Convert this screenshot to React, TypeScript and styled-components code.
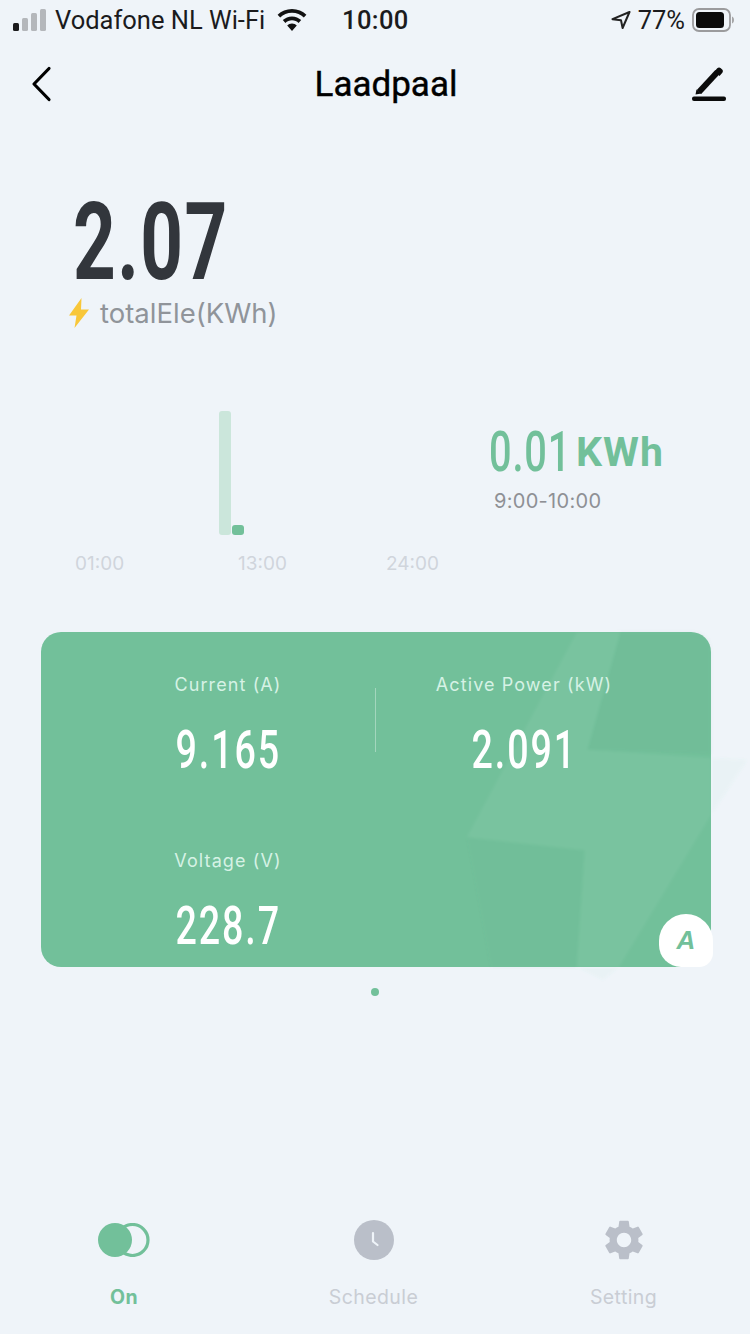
import React from "react";
import styled, { createGlobalStyle } from "styled-components";
import { MdSettings } from "react-icons/md";

const Global = createGlobalStyle`
  html, body { margin: 0; padding: 0; background: #eff4f9; }
  * { box-sizing: border-box; }
`;
const GREEN = "#72c09a";

const Page = styled.div`
  width: 750px; height: 1334px; background: #eff4f9; display: flex; flex-direction: column;
  font-family: Inter, "Liberation Sans", sans-serif; overflow: hidden; color: #000;
`;
const StatusBar = styled.div`
  height: 40px; padding: 0 13px; display: grid; grid-template-columns: 329px 80px 1fr; align-items: center;
  font-family: Roboto, sans-serif; font-size: 25.500px; color: #1b1b1d;
`;
const StatusLeft = styled.div`display: flex; align-items: center; white-space: nowrap;`;
const StatusCarrier = styled.span`margin: 0 12px 0 9px;`;
const StatusTime = styled.div`font-weight: 500; font-size: 25.500px; letter-spacing: 0.4px;`;
const StatusRight = styled.div`display: flex; align-items: center; justify-content: flex-end; gap: 7px; padding-right: 3px;`;
const NavBar = styled.div`
  height: 88px; padding: 0 24px 0 30px; display: flex; align-items: center; justify-content: space-between;
`;
const NavTitle = styled.div`font-family: Roboto, sans-serif; font-size: 35px; font-weight: 400; margin-left: 28px; -webkit-text-stroke: 0.4px #000;`;
const Hero = styled.section`padding: 71px 0 0 69px; height: 283px;`;
const Condensed = styled.span<{ $size: number; $weight?: number; $color?: string }>`
  display: inline-block; font-family: Roboto, sans-serif; white-space: nowrap;
  font-size: ${(p) => p.$size}px; line-height: ${(p) => Math.round(p.$size * 0.8)}px;
  font-weight: ${(p) => p.$weight ?? 500}; color: ${(p) => p.$color ?? "#fff"};
  transform: scaleX(0.71); letter-spacing: 0.02em;
`;
const HeroNumber = styled(Condensed)`transform-origin: left center; transform: scaleX(0.69); margin-left: 4px;`;
const HeroLabel = styled.div`
  display: flex; align-items: center; gap: 11px; margin-top: 11px; font-size: 27.500px; color: #90949a; line-height: 34px;
`;
const ChartRow = styled.section`
  height: 221px; padding-left: 75px; display: grid; grid-template-columns: 414px 1fr; position: relative;
`;
const ChartArea = styled.div`display: flex; flex-direction: column;`;
const Bars = styled.div`
  height: 124px; padding-left: 144px; display: flex; align-items: flex-end; gap: 1px;
`;
const Bar = styled.div<{ $h: number; $light?: boolean }>`
  width: 12px; height: ${(p) => p.$h}px; border-radius: 3px; background: ${(p) => (p.$light ? "#cbe6db" : GREEN)};
`;
const Axis = styled.div`
  display: flex; margin-top: 17px; font-size: 19px; line-height: 24px; color: #d0d5dc;
`;
const AxisLabel = styled.span<{ $w: number }>`width: ${(p) => p.$w}px; flex: none;`;
const Reading = styled.div`display: flex; flex-direction: column; padding-top: 21px;`;
const ReadingTop = styled.div`display: flex; align-items: center; height: 40px;`;
const ReadingNumber = styled(Condensed)`transform-origin: left center; width: 88px;`;
const ReadingUnit = styled.span`
  font-family: Roboto, sans-serif; font-size: 41px; font-weight: 700; color: ${GREEN}; letter-spacing: 1px; margin-left: -1px;
`;
const ReadingTime = styled.div`
  margin: 15px 0 0 5px; font-size: 20px; line-height: 28px; color: #8e9095; letter-spacing: 0.3px;
`;
const Card = styled.section`
  position: relative; margin: 0 39px 0 41px; height: 335px; border-radius: 20px; background: ${GREEN};
  padding: 39px 39px 0; display: grid; grid-template-columns: 296px 296px; grid-auto-rows: 176px;
`;
const BoltArt = styled.svg`position: absolute; left: 0; top: 0; overflow: visible; pointer-events: none;`;
const Metric = styled.div`
  position: relative; display: flex; flex-direction: column; align-items: center;
`;
const MetricLabel = styled.div`
  font-size: 18px; line-height: 28px; color: #d6f2e5; letter-spacing: 1.100px; white-space: nowrap;
`;
const MetricValue = styled(Condensed)`margin-top: 29px; line-height: 44px; letter-spacing: 0.05em;`;
const Divider = styled.div`
  position: absolute; right: 0; top: 17px; width: 1px; height: 64px; background: rgba(255,255,255,.35);
`;
const Badge = styled.div`
  position: absolute; right: -2px; bottom: 0; width: 54px; height: 53px; background: #fff;
  border-radius: 27px 27px 14px 22px; display: flex; align-items: center; justify-content: center;
  font-family: "Liberation Sans", sans-serif; font-style: italic; font-weight: 700; font-size: 26px; color: ${GREEN};
`;
const Pager = styled.div`display: flex; justify-content: center; margin-top: 21px;`;
const PagerDot = styled.span`width: 8px; height: 8px; border-radius: 50%; background: ${GREEN};`;
const TabBar = styled.nav`
  margin-top: auto; height: 134px; padding-top: 20px; display: grid; grid-template-columns: 248px 251px 249px;
`;
const Tab = styled.div`display: flex; flex-direction: column; align-items: center;`;
const TabIcon = styled.div`height: 40px; display: flex; align-items: center; justify-content: center;`;
const TabLabel = styled.div<{ $active?: boolean }>`
  margin-top: 22px; font-size: 19.500px; line-height: 30px; letter-spacing: 0.4px;
  font-weight: ${(p) => (p.$active ? 700 : 400)}; color: ${(p) => (p.$active ? GREEN : "#c9cdd4")};
`;

const Signal = () => (
  <svg width="33" height="22" viewBox="0 0 33 22">
    <rect x="0" y="14" width="6" height="8" rx="1.500" fill="#1b1b1d" />
    <rect x="9" y="9" width="6" height="13" rx="1.500" fill="#b4b7bb" />
    <rect x="18" y="4" width="6" height="18" rx="1.500" fill="#b4b7bb" />
    <rect x="27" y="0" width="6" height="22" rx="1.500" fill="#b4b7bb" />
  </svg>
);
const Wifi = () => (
  <svg width="30" height="22" viewBox="0 0 30 22" fill="#111">
    <path d="M15 0C9.400 0 4.300 2.200.6 5.800l2.600 2.800C6.200 5.600 10.400 3.800 15 3.800s8.800 1.800 11.800 4.800l2.600-2.800C25.700 2.200 20.600 0 15 0z" />
    <path d="M15 7.400c-3.600 0-6.800 1.400-9.200 3.700l2.600 2.800c1.700-1.700 4-2.700 6.600-2.700s4.900 1 6.600 2.700l2.600-2.800c-2.400-2.300-5.600-3.700-9.200-3.700z" />
    <path d="M15 14.600c-1.900 0-3.600.8-4.800 2L15 22l4.800-5.400c-1.200-1.200-2.900-2-4.800-2z" />
  </svg>
);
const LocationArrow = () => (
  <svg width="20" height="18" viewBox="0 0 20 18" fill="none" stroke="#222" strokeWidth="2" strokeLinejoin="round">
    <path d="M18.500 1 1.500 8.200 10 9.300 11.600 17z" />
  </svg>
);
const Battery = () => (
  <svg width="42" height="24" viewBox="0 0 42 24">
    <rect x="1" y="1" width="37" height="22" rx="6" fill="none" stroke="#9b9b9d" strokeWidth="1.800" />
    <rect x="4" y="4" width="28" height="16" rx="3.500" fill="#0a0a0a" />
    <path d="M40 8.500c1.200.4 2 1.800 2 3.500s-.8 3.100-2 3.500z" fill="#a5a5a7" />
  </svg>
);
const Back = () => (
  <svg width="22" height="36" viewBox="0 0 22 36" fill="none" stroke="#000" strokeWidth="3.200" strokeLinecap="round" strokeLinejoin="round">
    <path d="M19 2.500 4 18l15 15.500" />
  </svg>
);
const Pencil = () => (
  <svg width="34" height="34" viewBox="0 0 34 34">
    <path d="M7 25 25.500 5" fill="none" stroke="#0b0b0b" strokeWidth="6" strokeLinecap="butt" />
    <path d="M4.500 22.500 3.500 27.500 9.500 26.500z" fill="#0b0b0b" />
    <path d="M25 1.500c1-1.200 2.500-1.500 3.500-.6l1.700 1.500c1 1 .9 2.400-.1 3.500L27.500 9 22.500 4.500z" fill="#0b0b0b" />
    <rect x="0" y="29.500" width="34" height="4.500" rx="2" fill="#0b0b0b" />
  </svg>
);
const SmallBolt = () => (
  <svg width="20" height="30" viewBox="0 0 20 30">
    <path d="M12.500 0 0 17.500h7.500L5.500 30 20 11.500h-8z" fill="#f8c73a" />
  </svg>
);
const ToggleIcon = () => (
  <svg width="52" height="34" viewBox="0 0 52 34">
    <circle cx="34.500" cy="17" r="15.500" fill="none" stroke={GREEN} strokeWidth="3.200" />
    <circle cx="17" cy="17" r="17" fill={GREEN} />
  </svg>
);
const ClockIcon = () => (
  <svg width="40" height="40" viewBox="0 0 40 40">
    <circle cx="20" cy="20" r="20" fill="#babfc9" />
    <path d="M19 13v8.500l4.500 3.500" fill="none" stroke="#eff4f9" strokeWidth="2.200" strokeLinecap="round" strokeLinejoin="round" />
  </svg>
);

export default function App() {
  return (
    <Page>
      <Global />
      <StatusBar>
        <StatusLeft>
          <Signal />
          <StatusCarrier>Vodafone NL Wi-Fi</StatusCarrier>
          <Wifi />
        </StatusLeft>
        <StatusTime>10:00</StatusTime>
        <StatusRight>
          <LocationArrow />
          <span>77%</span>
          <Battery />
        </StatusRight>
      </StatusBar>
      <NavBar>
        <Back />
        <NavTitle>Laadpaal</NavTitle>
        <Pencil />
      </NavBar>
      <Hero>
        <HeroNumber $size={108} $weight={700} $color="#32363c">2.07</HeroNumber>
        <HeroLabel>
          <SmallBolt />
          <span>totalEle(KWh)</span>
        </HeroLabel>
      </Hero>
      <ChartRow>
        <ChartArea>
          <Bars>
            <Bar $h={124} $light />
            <Bar $h={10} />
          </Bars>
          <Axis>
            <AxisLabel $w={163}>01:00</AxisLabel>
            <AxisLabel $w={148}>13:00</AxisLabel>
            <AxisLabel $w={60}>24:00</AxisLabel>
          </Axis>
        </ChartArea>
        <Reading>
          <ReadingTop>
            <ReadingNumber $size={56} $color={GREEN}>0.01</ReadingNumber>
            <ReadingUnit>KWh</ReadingUnit>
          </ReadingTop>
          <ReadingTime>9:00-10:00</ReadingTime>
        </Reading>
      </ChartRow>
      <Card>
        <BoltArt width="670" height="335" viewBox="0 0 670 335">
          <defs>
            <filter id="soft" x="-10%" y="-10%" width="120%" height="120%">
              <feGaussianBlur stdDeviation="1.500" />
            </filter>
          </defs>
          <g filter="url(#soft)">
            <path d="M536 0 579 0 546 118 670 126 670 183 578 335 536 335 544 218 426 205z" fill="#fff" fillOpacity="0.05" />
            <path d="M579 0 650 0Q670 0 670 20L670 122 546 118z" fill="#5a9a80" fillOpacity="0.07" />
            <path d="M426 205 544 218 536 335 450 335z" fill="#5a9a80" fillOpacity="0.04" />
            <path d="M670 126 706 128 670 183z M536 335 578 335 562 348z" fill={GREEN} fillOpacity="0.04" />
          </g>
        </BoltArt>
        <Metric>
          <MetricLabel>Current (A)</MetricLabel>
          <MetricValue $size={53}>9.165</MetricValue>
          <Divider />
        </Metric>
        <Metric>
          <MetricLabel>Active Power (kW)</MetricLabel>
          <MetricValue $size={53}>2.091</MetricValue>
        </Metric>
        <Metric>
          <MetricLabel>Voltage (V)</MetricLabel>
          <MetricValue $size={53}>228.7</MetricValue>
        </Metric>
        <Badge>A</Badge>
      </Card>
      <Pager><PagerDot /></Pager>
      <TabBar>
        <Tab>
          <TabIcon><ToggleIcon /></TabIcon>
          <TabLabel $active>On</TabLabel>
        </Tab>
        <Tab>
          <TabIcon><ClockIcon /></TabIcon>
          <TabLabel>Schedule</TabLabel>
        </Tab>
        <Tab>
          <TabIcon><MdSettings size={48} color="#babfc9" /></TabIcon>
          <TabLabel>Setting</TabLabel>
        </Tab>
      </TabBar>
    </Page>
  );
}
